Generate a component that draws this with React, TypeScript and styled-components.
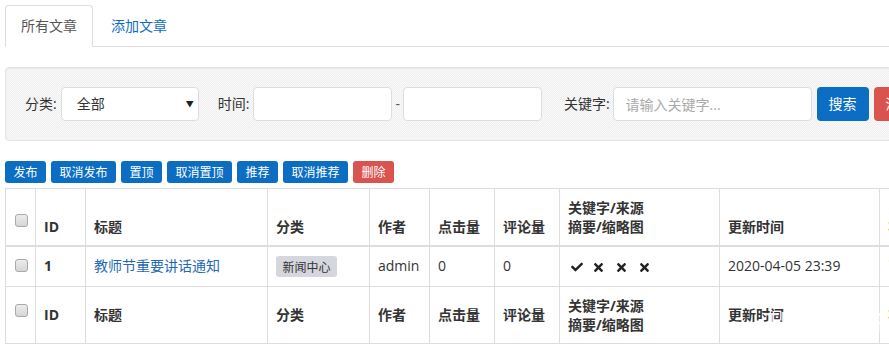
import React from "react";
import styled, { createGlobalStyle, css } from "styled-components";
import { FaCheck, FaTimes } from "react-icons/fa";

const GlobalStyle = createGlobalStyle`
  html, body { margin: 0; padding: 0; overflow: hidden; background: #fff; }
  body {
    font-family: "Open Sans", "Noto Sans CJK SC", sans-serif;
    font-size: 14px;
    line-height: 20px;
    color: #333;
  }
  * { box-sizing: border-box; }
`;

const BLUE = "#0b6ec3";
const RED = "#d9534f";

const Page = styled.div`
  position: relative;
  width: 1100px;
  padding: 5px 0 0 5px;
`;

const Tabs = styled.ul`
  display: flex;
  list-style: none;
  margin: 0;
  padding: 0;
  border-bottom: 1px solid #ddd;
`;

const Tab = styled.li<{ $active?: boolean }>`
  margin: 0 2px -1px 0;
  padding: 10px 15px;
  line-height: 20px;
  border: 1px solid transparent;
  border-radius: 4px 4px 0 0;
  color: ${BLUE};
  ${(p) =>
    p.$active &&
    css`
      color: #555;
      background: #fff;
      border-color: #ddd #ddd transparent #ddd;
    `}
`;

const Well = styled.form`
  display: flex;
  align-items: center;
  margin-top: 20px;
  padding: 19px;
  border: 1px solid #e3e3e3;
  border-radius: 4px;
  background: repeating-conic-gradient(#efefef 0 25%, #f9f9f9 0 50%) 0 0 / 2px 2px;
  box-shadow: inset 0 1px 1px rgba(0, 0, 0, 0.05);
`;

const Label = styled.label<{ $gap?: number; $after?: number }>`
  margin-left: ${(p) => p.$gap ?? 0}px;
  margin-right: ${(p) => p.$after ?? 4}px;
  white-space: nowrap;
  color: #333;
`;

const SelectWrap = styled.div`
  position: relative;
  width: 138px;
  height: 34px;
  &::after {
    content: "▼";
    position: absolute;
    right: 5px;
    top: 10px;
    font-size: 8px;
    line-height: 14px;
    color: #222;
    pointer-events: none;
  }
`;

const Select = styled.select`
  appearance: none;
  width: 100%;
  height: 100%;
  padding: 0 0 0 15px;
  border: 1px solid #ddd;
  border-radius: 4px;
  background: #fff;
  font: inherit;
  color: #333;
`;

const Input = styled.input<{ $w: number }>`
  width: ${(p) => p.$w}px;
  height: 34px;
  padding: 0 12px;
  border: 1px solid #ddd;
  border-radius: 4px;
  background: #fff;
  font: inherit;
  color: #333;
  &::placeholder { color: #aaa; }
`;

const Dash = styled.span`
  margin: 0 3px;
  color: #555;
`;

const Button = styled.button<{ $danger?: boolean }>`
  height: 34px;
  margin-left: 5px;
  padding: 0 12px;
  border: 0;
  border-radius: 4px;
  background: ${(p) => (p.$danger ? RED : BLUE)};
  color: #fff;
  font: inherit;
  white-space: nowrap;
`;

const Actions = styled.div`
  display: flex;
  gap: 5px;
  margin: 20px 0 5px;
`;

const SmallBtn = styled.button<{ $danger?: boolean }>`
  height: 22px;
  padding: 0 8.5px;
  border: 0;
  border-radius: 3px;
  background: ${(p) => (p.$danger ? RED : BLUE)};
  color: #fff;
  font-family: "Noto Sans CJK SC", sans-serif;
  font-size: 12px;
  line-height: 22px;
  white-space: nowrap;
`;

const Table = styled.table`
  width: 1005px;
  table-layout: fixed;
  border-collapse: collapse;
  border: 1px solid #ddd;
`;

const Th = styled.th<{ $foot?: boolean }>`
  padding: 9px 8px;
  line-height: 19px;
  text-align: left;
  font-weight: bold;
  color: #333;
  border: 1px solid #ddd;
  vertical-align: ${(p) => (p.$foot ? "middle" : "bottom")};
  border-bottom-width: ${(p) => (p.$foot ? 1 : 2)}px;
  white-space: nowrap;
  overflow: hidden;
`;

const Td = styled.td`
  padding: 8px 8px 9px;
  line-height: 20px;
  border: 1px solid #ddd;
  vertical-align: middle;
  white-space: nowrap;
  overflow: hidden;
`;

const Check = styled.span<{ $lift?: number }>`
  display: inline-block;
  width: 13px;
  height: 13px;
  margin-left: 1px;
  position: relative;
  top: ${(p) => p.$lift ?? 0}px;
  vertical-align: middle;
  border: 1px solid #a9a9a9;
  border-radius: 3px;
  background: linear-gradient(#ececec, #d6d6d6);
`;

const Link = styled.a`
  color: #2469b5;
  text-decoration: none;
`;

const Badge = styled.span`
  display: inline-block;
  padding: 0 6.5px;
  line-height: 21px;
  border-radius: 3px;
  background: #d6d6de;
  color: #333;
  font-size: 12px;
  font-family: "Noto Sans CJK SC", sans-serif;
  vertical-align: middle;
`;

const Icons = styled.span`
  display: inline-flex;
  align-items: center;
  color: #222;
  padding-left: 3px;
  vertical-align: middle;
  svg + svg { margin-left: 10px; }
  svg:first-child + svg { margin-left: 9px; }
`;

const Orange = styled.span`
  color: #f0a030;
  font-weight: bold;
`;

const Watermark = styled.div`
  position: absolute;
  left: 763px;
  top: 308px;
  font-family: "Liberation Sans", sans-serif;
  font-size: 27px;
  line-height: 30px;
  color: rgba(255, 255, 255, 0.9);
  pointer-events: none;
  letter-spacing: 0.5px;
`;

const widths = [30, 50, 182, 102, 60, 65, 65, 160, 160, 131];

const actionButtons = ["发布", "取消发布", "置顶", "取消置顶", "推荐", "取消推荐"];

function HeaderRow({ foot }: { foot?: boolean }) {
  return (
    <tr>
      <Th $foot={foot}>
        <Check $lift={foot ? -6 : -8} />
      </Th>
      <Th $foot={foot}>ID</Th>
      <Th $foot={foot}>标题</Th>
      <Th $foot={foot}>分类</Th>
      <Th $foot={foot}>作者</Th>
      <Th $foot={foot}>点击量</Th>
      <Th $foot={foot}>评论量</Th>
      <Th $foot={foot}>
        关键字/来源
        <br />
        摘要/缩略图
      </Th>
      <Th $foot={foot}>更新时间</Th>
      <Th $foot={foot}>
        <Orange>状态</Orange>
      </Th>
    </tr>
  );
}

function ActionBar() {
  return (
    <Actions>
      {actionButtons.map((t) => (
        <SmallBtn key={t} type="button">
          {t}
        </SmallBtn>
      ))}
      <SmallBtn type="button" $danger>
        删除
      </SmallBtn>
    </Actions>
  );
}

export default function App() {
  return (
    <>
      <GlobalStyle />
      <Page>
        <Tabs>
          <Tab $active>所有文章</Tab>
          <Tab>添加文章</Tab>
        </Tabs>
        <Well onSubmit={(e) => e.preventDefault()}>
          <Label>分类:</Label>
          <SelectWrap>
            <Select defaultValue="all">
              <option value="all">全部</option>
            </Select>
          </SelectWrap>
          <Label $gap={19}>时间:</Label>
          <Input $w={139} />
          <Dash>-</Dash>
          <Input $w={139} />
          <Label $gap={22} $after={3}>
            关键字:
          </Label>
          <Input $w={199} placeholder="请输入关键字..." />
          <Button type="submit">搜索</Button>
          <Button type="button" $danger>
            清空
          </Button>
        </Well>
        <ActionBar />
        <Table>
          <colgroup>
            {widths.map((w, i) => (
              <col key={i} style={{ width: w }} />
            ))}
          </colgroup>
          <thead>
            <HeaderRow />
          </thead>
          <tbody>
            <tr>
              <Td>
                <Check $lift={-2} />
              </Td>
              <Td>
                <b>1</b>
              </Td>
              <Td>
                <Link href="#">教师节重要讲话通知</Link>
              </Td>
              <Td>
                <Badge>新闻中心</Badge>
              </Td>
              <Td>admin</Td>
              <Td>0</Td>
              <Td>0</Td>
              <Td>
                <Icons>
                  <FaCheck size={12} />
                  <FaTimes size={13} />
                  <FaTimes size={13} />
                  <FaTimes size={13} />
                </Icons>
              </Td>
              <Td>2020-04-05 23:39</Td>
              <Td>
                <Orange>已发布</Orange>
              </Td>
            </tr>
          </tbody>
          <tfoot>
            <HeaderRow foot />
          </tfoot>
        </Table>
        <ActionBar />
        <Watermark>ThinkCMF</Watermark>
      </Page>
    </>
  );
}
